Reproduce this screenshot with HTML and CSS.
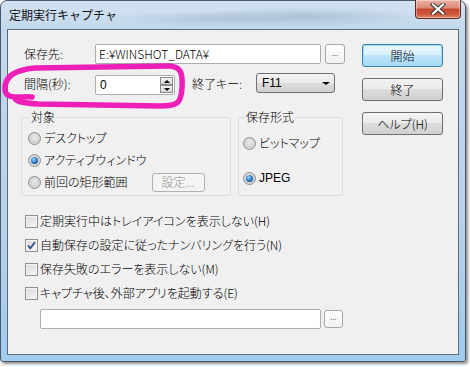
FILE: index.html
```html
<!DOCTYPE html>
<html>
  <head>
    <title>定期実行キャプチャ</title>
    <link rel="stylesheet" href="styles.css">
  </head>
  <body>
    <div class="window">
      <div class="titlebar">
        <span class="title">定期実行キャプチャ</span>
        <div class="close">
          <svg width="18" height="12" viewBox="0 0 18 12">
            <path d="M4 1.5 L14 10.5 M14 1.5 L4 10.5" stroke="#3a3a3a" stroke-width="4.2" stroke-linecap="square" />
            <path d="M4 1.5 L14 10.5 M14 1.5 L4 10.5" stroke="#ffffff" stroke-width="2.2" stroke-linecap="square" />
          </svg>
        </div>
      </div>

      <div class="client">
        <div class="top">
          <div class="form">
            <div class="row row-path">
              <label class="label">保存先:</label>
              <div class="field path-field">E:¥WINSHOT_DATA¥</div>
              <div class="btn small-btn">...</div>
            </div>

            <div class="row row-interval">
              <label class="label">間隔(秒):</label>
              <div class="field spin-field">
                <span>0</span>
                <div class="spin">
                  <div class="spin-btn"><i class="tri up"></i></div>
                  <div class="spin-btn"><i class="tri down"></i></div>
                </div>
              </div>
              <label class="label end-label">終了キー:</label>
              <div class="combo">
                <span>F11</span>
                <i class="tri down combo-arrow"></i>
              </div>
            </div>

            <div class="groups">
              <fieldset class="group target">
                <legend>対象</legend>
                <div class="radio-row"><span class="radio"></span>デスクトップ</div>
                <div class="radio-row"><span class="radio checked"></span>アクティブウィンドウ</div>
                <div class="radio-row">
                  <span class="radio"></span>前回の矩形範囲
                  <div class="btn disabled-btn">設定...</div>
                </div>
              </fieldset>
              <fieldset class="group format">
                <legend>保存形式</legend>
                <div class="radio-row"><span class="radio"></span>ビットマップ</div>
                <div class="radio-row"><span class="radio checked"></span>JPEG</div>
              </fieldset>
            </div>
          </div>

          <div class="actions">
            <div class="btn action-btn default-btn">開始</div>
            <div class="btn action-btn">終了</div>
            <div class="btn action-btn">ヘルプ(H)</div>
          </div>
        </div>

        <div class="checks">
          <div class="check-row"><span class="checkbox"></span>定期実行中はトレイアイコンを表示しない(H)</div>
          <div class="check-row">
            <span class="checkbox checked">
              <svg width="11" height="11" viewBox="0 0 11 11"><path d="M2 5.5 L4.3 8.2 L9 2" fill="none" stroke="#2a4f8a" stroke-width="1.8" /></svg>
            </span>自動保存の設定に従ったナンバリングを行う(N)
          </div>
          <div class="check-row"><span class="checkbox"></span>保存失敗のエラーを表示しない(M)</div>
          <div class="check-row"><span class="checkbox"></span>キャプチャ後、外部アプリを起動する(E)</div>
        </div>

        <div class="exec-row">
          <div class="field exec-field"></div>
          <div class="btn small-btn disabled-small">...</div>
        </div>
      </div>
    </div>

    <!-- hand-drawn marker round the interval field -->
    <svg class="marker" width="470" height="367" viewBox="0 0 470 367">
      <path d="M32 97 C20 96, 6 100, 5 90 C4 78, 12 70, 35 68 L168 66 C181 66, 183 73, 182 88 C181 103, 178 106, 160 106 L38 104 C22 103, 15 101, 15 98"
            fill="none" stroke="#ee1fb8" stroke-width="5.5" stroke-linecap="round" stroke-linejoin="round" />
    </svg>
  </body>
</html>
```

FILE: styles.css
```css
* {
  box-sizing: border-box;
}

body {
  margin: 0;
  width: 470px;
  height: 367px;
  overflow: hidden;
  position: relative;
  background: #ffffff;
  font-family: "Noto Sans CJK JP", "Liberation Sans", sans-serif;
  font-size: 12px;
  font-weight: 300;
  font-feature-settings: "palt";
  color: #000;
}

.window {
  width: 466px;
  height: 362px;
  border: 1px solid #4a5866;
  border-radius: 7px 7px 3px 3px;
  padding: 0 6px 6px 6px;
  display: flex;
  flex-direction: column;
  background:
    radial-gradient(ellipse 120px 10px at 300px 16px, rgba(120, 140, 165, 0.35), transparent),
    radial-gradient(ellipse 90px 8px at 200px 18px, rgba(140, 160, 185, 0.3), transparent),
    linear-gradient(to bottom, #d3e3f3 0, #c3d8ed 28px, #b8d2ea 60%, #9fcbee 100%);
  box-shadow: 2px 2px 3px rgba(0, 0, 0, 0.45);
}

.titlebar {
  height: 28px;
  display: flex;
  align-items: flex-start;
}

.title {
  margin: 6px 0 0 2px;
  font-size: 12px;
  font-weight: 400;
  font-feature-settings: normal;
  line-height: 16px;
  color: #111;
}

.close {
  margin: -1px -2px 0 auto;
  width: 46px;
  height: 19px;
  border: 1px solid #5e2a22;
  border-top: none;
  border-radius: 0 0 4px 4px;
  background: linear-gradient(to bottom, #eab2a4 0, #dd8a76 45%, #c7442d 50%, #cf5a3c 80%, #e08a6a 100%);
  box-shadow: inset 0 0 0 1px rgba(255, 255, 255, 0.4);
  display: flex;
  align-items: center;
  justify-content: center;
}

.client {
  flex: 1;
  border: 1px solid #5c6c7c;
  background: #f0f0f0;
  padding: 14px 0 0 13px;
  display: flex;
  flex-direction: column;
}

.top {
  display: flex;
  gap: 17px;
}

.form {
  width: 324px;
  display: flex;
  flex-direction: column;
}

.row {
  display: flex;
  align-items: center;
  padding-left: 3px;
}

.label {
  width: 71px;
  line-height: 14px;
}

.field {
  height: 20px;
  background: #fff;
  border: 1px solid #abadb3;
  border-radius: 2px;
  display: flex;
  align-items: center;
  padding-left: 3px;
  line-height: 14px;
  font-family: "Liberation Sans", "Noto Sans CJK JP", sans-serif;
  font-weight: 400;
}

.path-field {
  width: 226px;
  font-family: "Noto Sans CJK JP", sans-serif;
  font-weight: 300;
}

.btn {
  border: 1px solid #707070;
  border-radius: 3px;
  background: linear-gradient(to bottom, #f2f2f2 0, #ebebeb 50%, #dddddd 50%, #cfcfcf 100%);
  display: flex;
  align-items: center;
  justify-content: center;
  line-height: 14px;
}

.small-btn {
  width: 20px;
  height: 20px;
  margin-left: 4px;
  font-size: 9px;
  padding-bottom: 3px;
  align-items: flex-end;
  border-color: #a6a6a6;
  background: linear-gradient(to bottom, #fdfdfd, #f2f2f2);
  color: #333;
}

.row-interval {
  margin-top: 9px;
  height: 21px;
}

.spin-field {
  width: 80px;
  height: 20px;
  margin-top: 3px;
  padding-left: 4px;
  justify-content: space-between;
  padding-right: 1px;
}

.spin {
  width: 13px;
  height: 16px;
  display: flex;
  flex-direction: column;
}

.spin-btn {
  flex: 1;
  border: 1px solid #8a8a8a;
  background: linear-gradient(to bottom, #f4f4f4, #d6d6d6);
  display: flex;
  align-items: center;
  justify-content: center;
}

.tri {
  width: 0;
  height: 0;
  border-left: 3px solid transparent;
  border-right: 3px solid transparent;
}

.tri.up {
  border-bottom: 3px solid #000;
}

.tri.down {
  border-top: 3px solid #000;
}

.end-label {
  margin-left: 17px;
  width: 64px;
}

.combo {
  width: 79px;
  height: 20px;
  margin-top: -1px;
  border: 1px solid #707070;
  border-radius: 3px;
  background: linear-gradient(to bottom, #f2f2f2 0, #ebebeb 50%, #dddddd 50%, #cfcfcf 100%);
  display: flex;
  align-items: center;
  justify-content: space-between;
  padding: 0 4px 0 5px;
  font-family: "Liberation Sans", sans-serif;
  font-weight: 400;
}

.combo-arrow {
  border-left-width: 4px;
  border-right-width: 4px;
  border-top-width: 4px;
}

.groups {
  display: flex;
  gap: 7px;
  margin-top: 16px;
}

.group {
  margin: 0;
  height: 86px;
  border: 1px solid #d5dfe5;
  border-radius: 3px;
  padding: 3px 0 0 6px;
}

.group legend {
  padding: 0 1px;
  margin: 0 0 0 2px;
  line-height: 14px;
}

.target {
  width: 210px;
}

.format {
  width: 105px;
  padding-left: 4px;
}

.radio-row {
  display: flex;
  align-items: center;
  height: 22px;
  line-height: 14px;
}

.format .radio-row:first-of-type {
  margin-top: 5px;
}

.format .radio-row:nth-of-type(2) {
  margin-top: 13px;
  font-family: "Liberation Sans", sans-serif;
  font-weight: 400;
}

.radio {
  width: 13px;
  height: 13px;
  border-radius: 50%;
  border: 1px solid #8e8f8f;
  background: radial-gradient(circle at 50% 40%, #ececec 0, #d0d0d0 60%, #e8e8e8 100%);
  margin-right: 3px;
  display: flex;
  align-items: center;
  justify-content: center;
}

.radio.checked::after {
  content: "";
  width: 7px;
  height: 7px;
  border-radius: 50%;
  background: radial-gradient(circle at 40% 35%, #9ed6ff 0, #2a7cc8 50%, #0c3f78 100%);
}

.disabled-btn {
  margin-left: 24px;
  width: 53px;
  height: 19px;
  border-color: #adb2b5;
  background: #f4f4f4;
  color: #8d8d8d;
}

.actions {
  display: flex;
  flex-direction: column;
  gap: 11px;
}

.action-btn {
  width: 81px;
  height: 23px;
}

.default-btn {
  border-color: #3c7fb1;
  box-shadow: inset 0 0 0 1px #9fdcf5;
  background: linear-gradient(to bottom, #eaf6fd 0, #d9f0fc 50%, #bee6fd 50%, #a7d9f5 100%);
}

.checks {
  margin-top: 13px;
  padding-left: 4px;
  display: flex;
  flex-direction: column;
}

.check-row {
  height: 24px;
  display: flex;
  align-items: center;
  line-height: 14px;
}

.checkbox {
  width: 13px;
  height: 13px;
  border: 1px solid #8e8f8f;
  background: linear-gradient(135deg, #d8d8d8, #f6f6f6);
  box-shadow: inset 0 0 0 1px #f4f4f4;
  margin-right: 2px;
  display: flex;
  align-items: center;
  justify-content: center;
}

.exec-row {
  display: flex;
  align-items: flex-start;
  margin: 4px 0 0 19px;
}

.exec-field {
  width: 281px;
}

.disabled-small {
  width: 19px;
  height: 18px;
  margin-top: 1px;
  margin-left: 3px;
}

.marker {
  position: absolute;
  left: 0;
  top: 0;
  pointer-events: none;
}
```
